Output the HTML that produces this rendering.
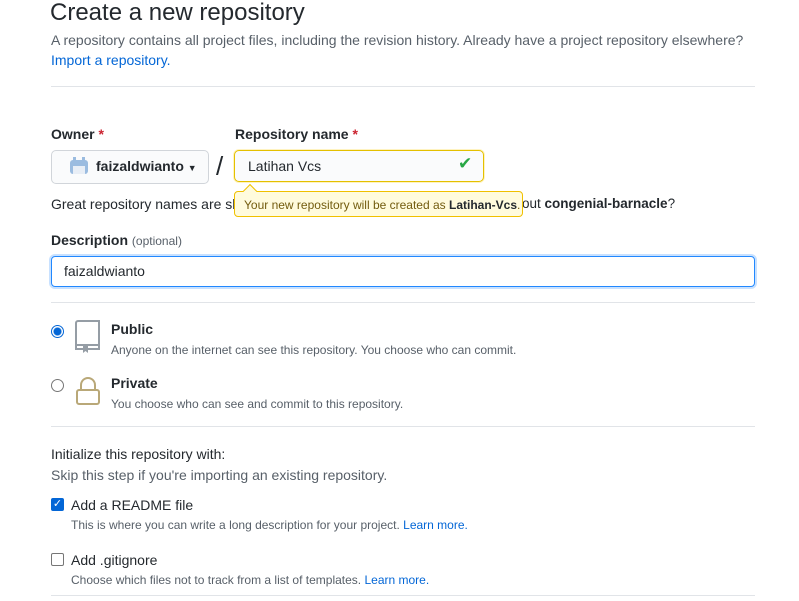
<!DOCTYPE html>
<html><head><style>
body{margin:0;width:799px;height:601px;overflow:hidden;background:#fff;font-family:"Liberation Sans",sans-serif;color:#24292e;position:relative}
.a{position:absolute;white-space:nowrap}
.hr{position:absolute;left:51px;width:704px;height:1px;background:#e1e4e8}
.s{font-size:12px;color:#586069}
.b{font-weight:bold;font-size:14px}
a{color:#0366d6;text-decoration:none}
</style></head><body>
<div class="a" style="left:50px;top:-1px;font-size:24px">Create a new repository</div>
<div class="a" style="left:51px;top:32px;font-size:14px;color:#586069">A repository contains all project files, including the revision history. Already have a project repository elsewhere?</div>
<div class="a" style="left:51px;top:52px;font-size:14px"><a>Import a repository.</a></div>
<div class="hr" style="top:86px"></div>
<div class="a b" style="left:51px;top:126px">Owner <span style="color:#cb2431">*</span></div>
<div class="a b" style="left:235px;top:126px">Repository name <span style="color:#cb2431">*</span></div>
<div class="a" style="left:51px;top:150px;width:156px;height:32px;border:1px solid #d1d5da;border-radius:5px;background:#fafbfc"></div>
<svg class="a" style="left:68px;top:156px" width="22" height="20"><rect x="2" y="4" width="18" height="14" rx="3" fill="#9bbce0"/><rect x="5" y="1" width="3" height="5" fill="#9bbce0"/><rect x="14" y="1" width="3" height="5" fill="#9bbce0"/><rect x="5" y="10" width="12" height="8" fill="#e8eef6"/></svg>
<div class="a b" style="left:96px;top:158px">faizaldwianto <span style="font-size:9px">▼</span></div>
<div class="a" style="left:216px;top:151px;font-size:26px">/</div>
<div class="a" style="left:234px;top:150px;width:248px;height:30px;border:1px solid #e4c000;border-radius:5px;background:#fafbfc;box-shadow:0 0 0 1px #fff3c0"></div>
<div class="a" style="left:248px;top:158px;font-size:14px">Latihan Vcs</div>
<div class="a" style="left:458px;top:154px;color:#28a745;font-size:17px">✔</div>
<div class="a" style="left:51px;top:196px;font-size:14px">Great repository names are sh</div>
<div class="a" style="left:522px;top:196px;font-size:13.5px">out <b>congenial-barnacle</b>?</div>
<div class="a" style="left:234px;top:191px;width:287px;height:24px;background:#fffbdd;border:1px solid #f0c000;border-radius:4px"></div>
<div class="a" style="left:245px;top:186px;width:9px;height:9px;background:#fffbdd;border-left:1px solid #f0c000;border-top:1px solid #f0c000;transform:rotate(45deg)"></div>
<div class="a" style="left:244px;top:198px;font-size:12px;color:#735c0f">Your new repository will be created as <b style="color:#24292e">Latihan-Vcs</b>.</div>
<div class="a b" style="left:51px;top:232px">Description <span style="font-weight:normal;font-size:12px;color:#586069">(optional)</span></div>
<div class="a" style="left:51px;top:256px;width:702px;height:29px;border:1px solid #2188ff;border-radius:4px;box-shadow:0 0 0 2px #c8e1ff"></div>
<div class="a" style="left:64px;top:263px;font-size:14px">faizaldwianto</div>
<div class="hr" style="top:302px"></div>
<div class="a" style="left:51px;top:325px;width:11px;height:11px;border-radius:50%;border:1px solid #0366d6;background:radial-gradient(#0366d6 3.5px,#fff 4.5px)"></div>
<svg class="a" style="left:74px;top:320px" width="28" height="34"><path d="M2 30V3a2 2 0 0 1 2-2h21v28H2M2 25h23" stroke="#959da5" stroke-width="2" fill="none"/><path d="M9 26v7l2.5-2 2.5 2v-7z" fill="#959da5"/></svg>
<div class="a b" style="left:111px;top:321px">Public</div>
<div class="a s" style="left:111px;top:343px">Anyone on the internet can see this repository. You choose who can commit.</div>
<div class="a" style="left:51px;top:379px;width:11px;height:11px;border-radius:50%;border:1px solid #767676"></div>
<svg class="a" style="left:74px;top:375px" width="28" height="32"><path d="M7 14V10a7 7 0 0 1 14 0v4" stroke="#b9a878" stroke-width="2" fill="none"/><rect x="3" y="15" width="22" height="14" rx="2" stroke="#b9a878" stroke-width="2" fill="none"/></svg>
<div class="a b" style="left:111px;top:375px">Private</div>
<div class="a s" style="left:111px;top:397px">You choose who can see and commit to this repository.</div>
<div class="hr" style="top:426px"></div>
<div class="a b" style="left:51px;top:446px;font-weight:normal">Initialize this repository with:</div>
<div class="a" style="left:51px;top:467px;font-size:14px;color:#586069">Skip this step if you're importing an existing repository.</div>
<div class="a" style="left:51px;top:498px;width:13px;height:13px;background:#0366d6;border-radius:2px;color:#fff;font-size:11px;text-align:center;line-height:13px">✓</div>
<div class="a b" style="left:71px;top:497px;font-weight:normal">Add a README file</div>
<div class="a s" style="left:71px;top:518px">This is where you can write a long description for your project. <a>Learn more.</a></div>
<div class="a" style="left:51px;top:553px;width:11px;height:11px;border:1px solid #767676;border-radius:2px"></div>
<div class="a b" style="left:71px;top:552px;font-weight:normal">Add .gitignore</div>
<div class="a s" style="left:71px;top:573px">Choose which files not to track from a list of templates. <a>Learn more.</a></div>
<div class="hr" style="top:595px"></div>
</body></html>
